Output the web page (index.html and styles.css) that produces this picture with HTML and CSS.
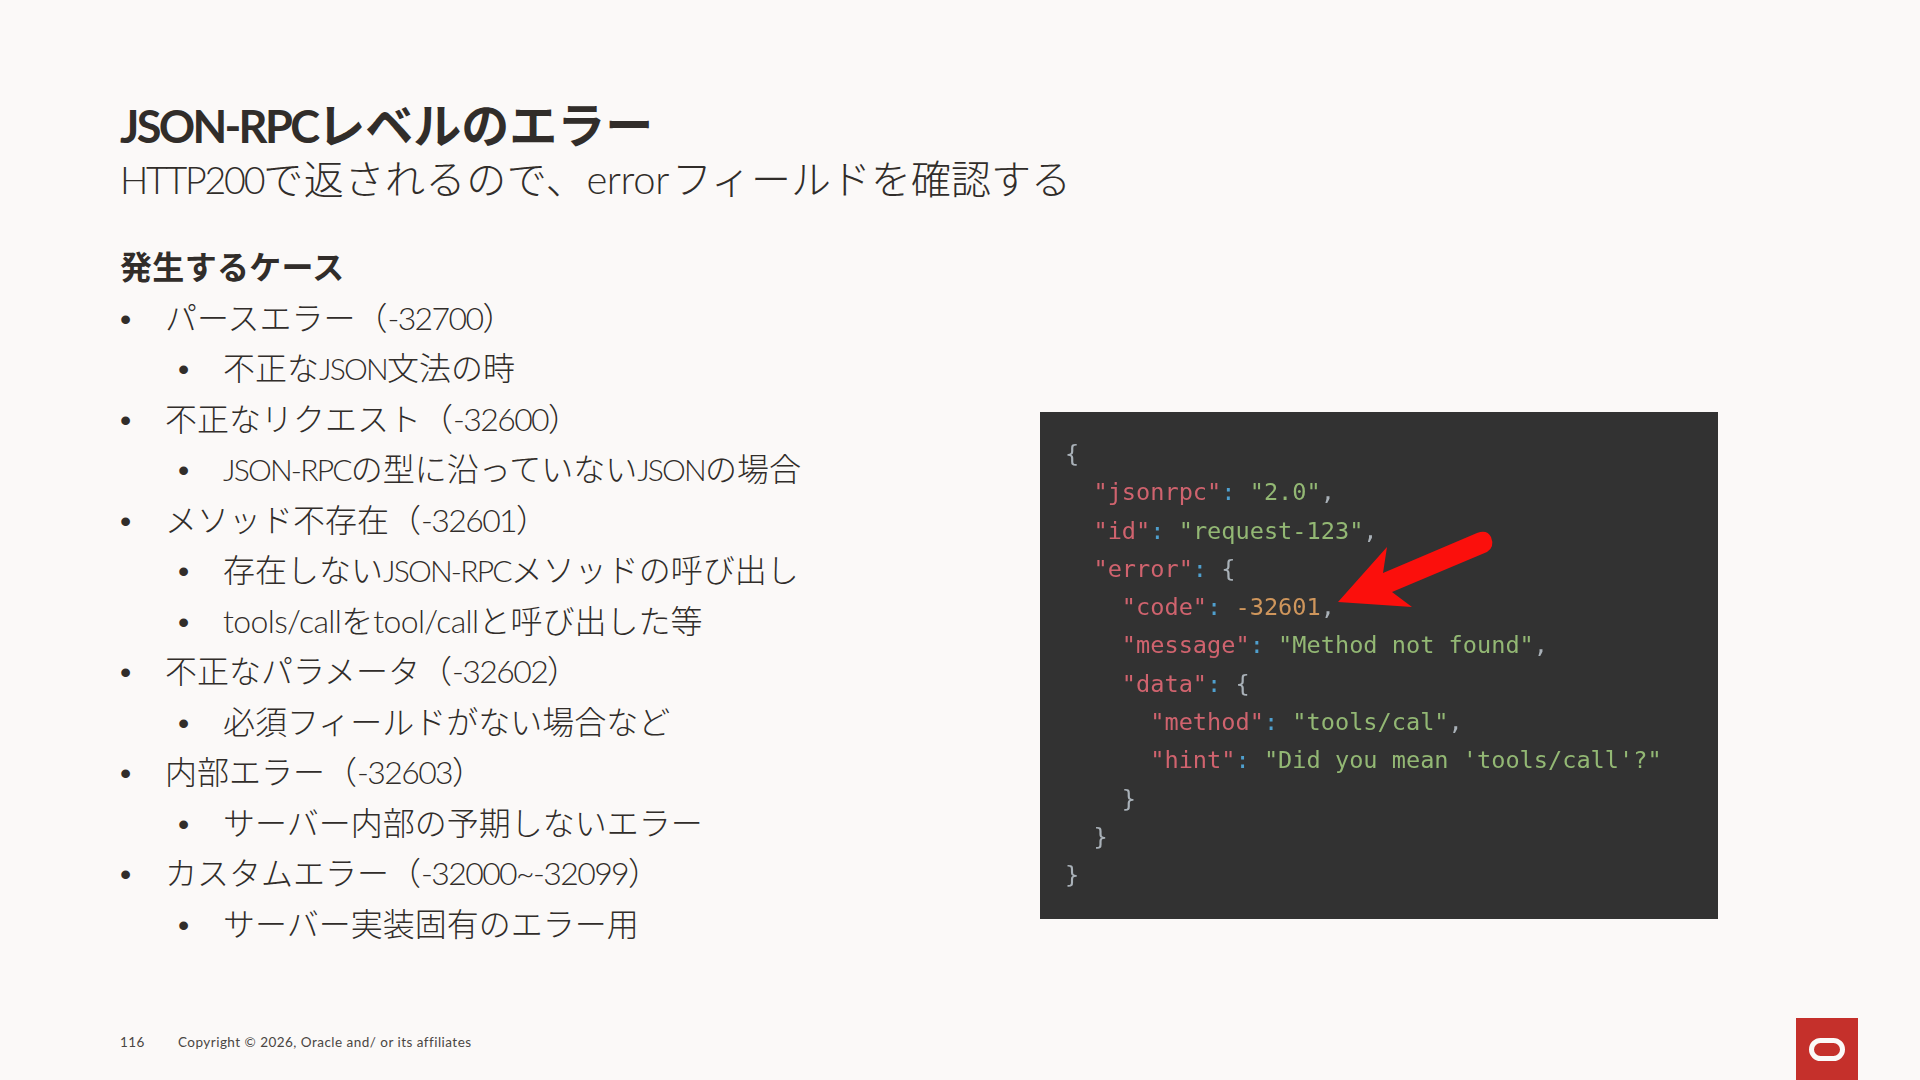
FILE: index.html
```html
<!DOCTYPE html>
<html lang="ja">
<head>
<meta charset="utf-8">
<title>JSON-RPCレベルのエラー</title>
<link rel="stylesheet" href="styles.css">
</head>
<body>
<div class="slide">
  <header class="head">
    <h1 class="title"><span class="la">JSON-RPC</span>レベルのエラー</h1>
    <p class="subtitle"><span class="la">HTTP200</span><span class="mid">で返されるので、</span><span class="lc">error</span>フィールドを確認する</p>
  </header>
  <main class="main">
    <section class="left">
      <h2 class="case">発生するケース</h2>
      <ul class="list">
        <li class="l1">パースエラー（<span class="nu">-32700</span>）</li>
        <li class="l2">不正な<span class="la">JSON</span>文法の時</li>
        <li class="l1">不正なリクエスト（<span class="nu">-32600</span>）</li>
        <li class="l2"><span class="la">JSON-RPC</span>の型に沿っていない<span class="la">JSON</span>の場合</li>
        <li class="l1">メソッド不存在（<span class="nu">-32601</span>）</li>
        <li class="l2">存在しない<span class="la">JSON-RPC</span>メソッドの呼び出し</li>
        <li class="l2"><span class="lc">tools/call</span>を<span class="lc">tool/call</span>と呼び出した等</li>
        <li class="l1">不正なパラメータ（<span class="nu">-32602</span>）</li>
        <li class="l2">必須フィールドがない場合など</li>
        <li class="l1">内部エラー（<span class="nu">-32603</span>）</li>
        <li class="l2">サーバー内部の予期しないエラー</li>
        <li class="l1">カスタムエラー（<span class="nu">-32000~-32099</span>）</li>
        <li class="l2">サーバー実装固有のエラー用</li>
      </ul>
    </section>
    <figure class="code">
<pre class="pre"><span class="p">{</span>
  <span class="k">"jsonrpc"</span><span class="c">:</span> <span class="s">"2.0"</span><span class="p">,</span>
  <span class="k">"id"</span><span class="c">:</span> <span class="s">"request-123"</span><span class="p">,</span>
  <span class="k">"error"</span><span class="c">:</span> <span class="p">{</span>
    <span class="k">"code"</span><span class="c">:</span> <span class="n">-32601</span><span class="p">,</span>
    <span class="k">"message"</span><span class="c">:</span> <span class="s">"Method not found"</span><span class="p">,</span>
    <span class="k">"data"</span><span class="c">:</span> <span class="p">{</span>
      <span class="k">"method"</span><span class="c">:</span> <span class="s">"tools/cal"</span><span class="p">,</span>
      <span class="k">"hint"</span><span class="c">:</span> <span class="s">"Did you mean 'tools/call'?"</span>
    <span class="p">}</span>
  <span class="p">}</span>
<span class="p">}</span></pre>
      <svg class="arrow" width="678" height="507" viewBox="0 0 678 507" aria-hidden="true">
        <path d="M298 190 L347 135 L343 161 L437 121 Q447 117 451 125 Q455 135 447 140 L352 180 L372 195 Z" fill="#fb0f0c"/>
      </svg>
    </figure>
  </main>
  <footer class="foot">
    <span class="page">116</span>
    <span class="copy">Copyright © 2026, Oracle and/ or its affiliates</span>
    <div class="logo">
      <svg width="36" height="23" viewBox="0 0 36 23" aria-hidden="true"><rect x="2.5" y="2.5" width="31" height="18" rx="9" fill="none" stroke="#fbf9f8" stroke-width="5"/></svg>
    </div>
  </footer>
</div>
</body>
</html>
```
FILE: styles.css
```css
* { box-sizing: border-box; }
html, body { margin: 0; padding: 0; }
body {
  width: 1920px;
  height: 1080px;
  overflow: hidden;
  background: #fbf9f8;
  color: #312d2a;
  font-family: Lato, "Noto Sans CJK JP", sans-serif;
}
.slide {
  height: 1080px;
  padding: 96px 0 0 120px;
  display: flex;
  flex-direction: column;
}
.la { font-size: 0.94em; letter-spacing: -0.06em; line-height: 1; }
.lc { letter-spacing: -0.02em; line-height: 1; }
.nu { letter-spacing: -0.05em; line-height: 1; }
.mid { letter-spacing: 0.015em; }
.title {
  margin: 0;
  font-size: 48px;
  font-weight: 700;
  line-height: 58px;
}
.subtitle {
  margin: 0;
  font-size: 40px;
  font-weight: 300;
  line-height: 50px;
}
.subtitle .lc { letter-spacing: -0.01em; margin-right: 3px; }
.main {
  display: flex;
  flex: 1;
  margin-top: 38px;
}
.left { width: 920px; }
.case {
  margin: 0;
  font-size: 32px;
  font-weight: 700;
  letter-spacing: 0.01em;
  line-height: 50.5px;
}
.list {
  list-style: none;
  margin: 0;
  padding: 0;
}
.l1, .l2 {
  font-size: 32px;
  font-weight: 300;
  line-height: 50.5px;
  padding-left: 45px;
  text-indent: -45px;
}
.l1::before, .l2::before {
  content: "•";
  display: inline-block;
  width: 45px;
  text-indent: 0;
  font-family: "Liberation Sans", sans-serif;
  font-weight: 400;
  line-height: 1;
}
.l2 { margin-left: 58px; }
.code {
  position: relative;
  margin: 170px 0 0 0;
  width: 678px;
  height: 507px;
  background: #323232;
  overflow: hidden;
}
.pre {
  margin: 0;
  padding: 23px 0 0 25px;
  font-family: "DejaVu Sans Mono", monospace;
  font-size: 23.6px;
  line-height: 38.3px;
  color: #a9b1b8;
  filter: blur(0.5px);
}
.k { color: #d0636e; }
.s { color: #93b874; }
.n { color: #cf965c; }
.c { color: #4fa0cf; }
.p { color: #a9b1b8; }
.arrow {
  position: absolute;
  left: 0;
  top: 0;
}
.foot {
  display: flex;
  align-items: flex-start;
  height: 62px;
  font-size: 13.5px;
  line-height: 48px;
  letter-spacing: 0.035em;
  color: #4a4643;
}
.page { width: 58px; }
.copy { flex: 1; }
.logo {
  width: 62px;
  height: 62px;
  margin-right: 62px;
  background: #c5302b;
  display: flex;
  align-items: center;
  justify-content: center;
}
```
